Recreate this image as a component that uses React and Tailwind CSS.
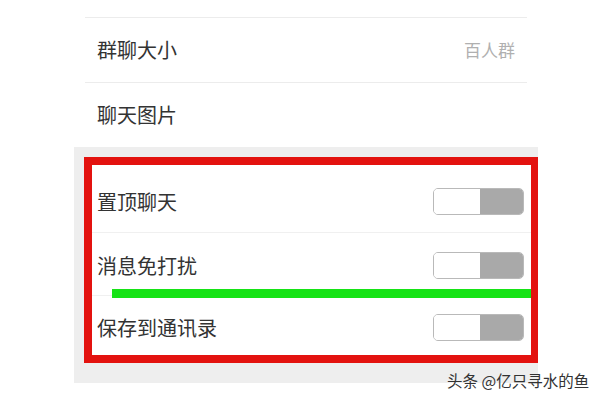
import React from "react";

const Toggle = () => (
  <div className="flex h-[27px] w-[91px] overflow-hidden rounded-[5px] border border-[#b9b9b9]">
    <div className="w-[46px] bg-white" />
    <div className="flex-1 bg-[#a9a9a9]" />
  </div>
);

const TopRow = ({ label, value, className = "" }) => (
  <div className={`flex h-[64px] items-center justify-between pl-[23px] pr-[23px] ${className}`}>
    <span className="text-[20px] text-[#333]">{label}</span>
    {value ? <span className="text-[17px] text-[#b0b0b0]">{value}</span> : null}
  </div>
);

const SwitchRow = ({ label, className = "" }) => (
  <div className={`flex items-center justify-between pl-[5px] pr-[7px] ${className}`}>
    <span className="text-[20px] text-[#333]">{label}</span>
    <Toggle />
  </div>
);

function App() {
  return (
    <main
      className="relative h-[400px] w-[600px] overflow-hidden bg-white"
      style={{ fontFamily: '"Noto Sans CJK SC", "Noto Sans", sans-serif' }}
    >
      <section className="ml-[74px] w-[464px]">
        <div className="-mt-[47px] bg-white">
          <div className="border-b border-[#ececec] mx-[11px]">
            <TopRow label="群聊名称" value="未命名" className="-mx-[11px] px-[34px] text-[#ccc]" />
          </div>
          <div className="border-b border-[#ececec] mx-[11px]">
            <TopRow label="群聊大小" value="百人群" className="-mx-[11px]" />
          </div>
          <TopRow label="聊天图片" />
        </div>

        <div className="bg-[#eeeeee] pt-[10px] pb-[20px] pl-[10px]">
          <div className="relative border-[8px] border-r-[7px] border-[#e3120f] bg-white">
            <SwitchRow label="置顶聊天" className="h-[68px] pt-[6px] border-b border-[#f0f0f0]" />
            <SwitchRow label="消息免打扰" className="h-[63px] pt-[3px] border-b border-[#f0f0f0]" />
            <SwitchRow label="保存到通讯录" className="h-[59px] pt-[4px]" />
            <div className="absolute left-[20px] right-0 top-[124px] h-[9px] bg-[#16e316]" />
          </div>
        </div>
      </section>

      <div className="absolute left-[447px] top-[370px] text-[15.5px] leading-[20px] text-[#333]">
        头条 @亿只寻水的鱼
      </div>
    </main>
  );
}

export default App;
